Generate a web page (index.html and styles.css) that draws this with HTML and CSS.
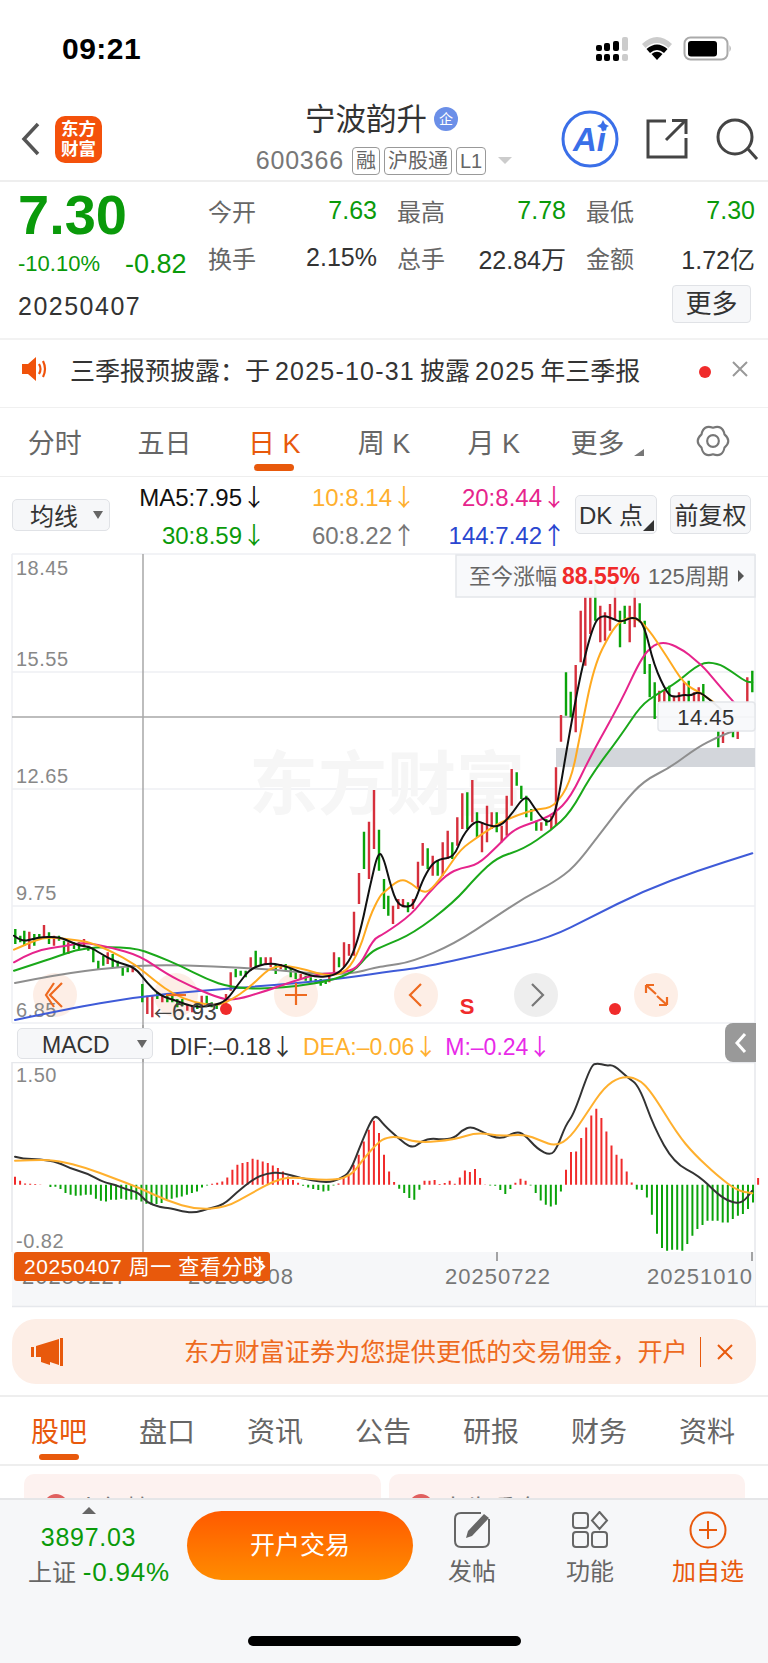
FILE: index.html
```html
<!DOCTYPE html>
<html lang="zh">
<head>
	<meta charset="utf-8">
	<title>宁波韵升</title>
	<link rel="stylesheet" href="styles.css">
</head>
<body>
<div id="page">
	<div class="status">
		<span class="time">09:21</span>
		<svg class="status-icons" width="136" height="26" viewBox="596 36 136 26">
			<g fill="#000">
				<rect x="596" y="45" width="6" height="6" rx="2"/><rect x="604" y="43" width="6" height="8" rx="2"/><rect x="613" y="41" width="6" height="10" rx="2"/>
				<rect x="596" y="54" width="6" height="7" rx="2"/><rect x="604" y="54" width="6" height="7" rx="2"/><rect x="613" y="54" width="6" height="7" rx="2"/>
			</g>
			<rect x="622" y="37" width="6" height="14" rx="2" fill="#ccc"/><rect x="622" y="54" width="6" height="7" rx="2" fill="#ccc"/>
			<path d="M642 44 Q657 30 672 44 L668.500 48 Q657 38 645.500 48Z" fill="#ccc"/>
			<path d="M646.500 49 Q657 40 667.500 49 L664 53 Q657 47 650 53Z" fill="#000"/>
			<path d="M651.500 54 Q657 49.500 662.500 54 L657 60Z" fill="#000"/>
			<rect x="684.500" y="37.500" width="43" height="22" rx="6" fill="none" stroke="#aaa" stroke-width="2"/>
			<rect x="688" y="41" width="29" height="15.500" rx="3" fill="#000"/>
			<path d="M729.500 45 Q732 48.500 729.500 52Z" fill="#aaa"/>
		</svg>
	</div>

	<div class="header">
		<div class="header-left">
			<svg width="20" height="36" viewBox="0 0 20 36"><path d="M17 3 L3 18 L17 33" fill="none" stroke="#555" stroke-width="3.500"/></svg>
			<div class="logo"><span>东方</span><span>财富</span></div>
		</div>
		<div class="title-block">
			<div class="title">宁波韵升<span class="ent">企</span></div>
			<div class="subtitle">
				<span class="code">600366</span>
				<span class="tag">融</span><span class="tag">沪股通</span><span class="tag">L1</span>
				<span class="caret"></span>
			</div>
		</div>
		<div class="header-right">
			<svg class="ai" width="58" height="58" viewBox="0 0 58 58">
				<circle cx="29" cy="29" r="27" fill="#fff" stroke="#3a6fe8" stroke-width="3"/>
				<text x="12" y="41" class="ai-text">Ai</text>
				<path d="M42 10 L44 14 L48 16 L44 18 L42 22 L40 18 L36 16 L40 14Z" fill="#3a6fe8"/>
			</svg>
			<svg width="42" height="42" viewBox="0 0 42 42" fill="none" stroke="#444" stroke-width="3">
				<path d="M20 3 H2 V39 H40 V20"/><path d="M20 22 L39 3"/><path d="M26 2.500 H40 V16"/>
			</svg>
			<svg width="44" height="44" viewBox="0 0 44 44" fill="none" stroke="#444" stroke-width="3">
				<circle cx="20" cy="20" r="17"/><path d="M33 32 L42 42"/>
			</svg>
		</div>
	</div>

	<div class="quote">
		<div class="quote-left">
			<div class="price">7.30</div>
			<div class="change"><span class="pct">-10.10%</span><span class="diff">-0.82</span></div>
			<div class="date">20250407</div>
		</div>
		<div class="quote-right">
			<div class="stats">
				<span class="k">今开</span><span class="v green">7.63</span>
				<span class="k">最高</span><span class="v green">7.78</span>
				<span class="k">最低</span><span class="v green">7.30</span>
				<span class="k">换手</span><span class="v">2.15%</span>
				<span class="k">总手</span><span class="v">22.84万</span>
				<span class="k">金额</span><span class="v">1.72亿</span>
			</div>
			<div class="more-btn">更多</div>
		</div>
	</div>

	<div class="notice">
		<svg width="28" height="28" viewBox="0 0 28 28">
			<path d="M1 9 H7 L15 2 V26 L7 19 H1Z" fill="#f0520a"/>
			<path d="M18 9 Q21 14 18 19 M22 6 Q26 14 22 22" fill="none" stroke="#f0520a" stroke-width="2.200"/>
		</svg>
		<div class="notice-text">三季报预披露：于<span class="num">2025-10-31</span>披露<span class="num">2025</span>年三季报</div>
		<span class="dot"></span>
		<svg class="notice-x" width="16" height="16" viewBox="0 0 16 16"><path d="M1 1 L15 15 M15 1 L1 15" stroke="#999" stroke-width="2"/></svg>
	</div>

	<div class="period-tabs">
		<div class="ptab">分时</div>
		<div class="ptab">五日</div>
		<div class="ptab on">日 K</div>
		<div class="ptab">周 K</div>
		<div class="ptab">月 K</div>
		<div class="ptab has-corner">更多</div>
		<div class="ptab">
			<svg width="34" height="32" viewBox="0 0 32 30" fill="none" stroke="#777" stroke-width="2">
				<path d="M16 2.500 Q25 -.6 26.800 8.750 Q34 15 26.800 21.250 Q25 30.600 16 27.500 Q7 30.600 5.200 21.250 Q-2 15 5.200 8.750 Q7 -.6 16 2.500Z"/>
				<circle cx="16" cy="15" r="5.500"/>
			</svg>
		</div>
	</div>

	<div class="ma-row">
		<div class="select ma-select">均线<span class="sel-caret"></span></div>
		<div class="ma-legend">
			<span class="black">MA5:7.95<span class="arr">↓</span></span><span class="orange">10:8.14<span class="arr">↓</span></span><span class="pink">20:8.44<span class="arr">↓</span></span>
			<span class="green">30:8.59<span class="arr">↓</span></span><span class="grey">60:8.22<span class="arr">↑</span></span><span class="blue">144:7.42<span class="arr">↑</span></span>
		</div>
		<div class="tool-btn dk">DK 点</div>
		<div class="tool-btn fq">前复权</div>
	</div>

	<svg class="chart-main" width="768" height="473" viewBox="0 553 768 473">
		<g class="grid">
			<path d="M12 555 H755 M12 673 H755 M12 790 H755 M12 907 H755 M12 1024 H755 M12 555 V1024 M755 555 V1024"/>
		</g>
		<text x="249" y="810" class="watermark">东方财富</text>
		<path d="M12 718 H755 M143 555 V1026" class="cross"/>
		<rect x="556" y="749" width="199" height="19" fill="#d3d6db"/>
		<g class="round-btn">
			<circle cx="55" cy="996" r="22"/><circle cx="176" cy="996" r="22"/><circle cx="296" cy="996" r="22"/><circle cx="416" cy="996" r="22"/>
			<circle cx="536" cy="996" r="22" class="off"/><circle cx="656" cy="996" r="22"/>
		</g>
		<g class="axis">
			<text x="16" y="576">18.45</text>
			<text x="16" y="667">15.55</text>
			<text x="16" y="784">12.65</text>
			<text x="16" y="901">9.75</text>
			<text x="16" y="1018">6.85</text>
		</g>
		<g id="candles"></g>
		<g id="ma-lines" fill="none" stroke-width="2" stroke-linejoin="round" stroke-linecap="round"></g>
		<g class="round-glyph">
			<path d="M62 984 L50 996 L62 1008 M54 984 L46 996 L54 1008"/>
			<path d="M166 996 H186"/>
			<path d="M296 984 V1006 M285 996 H307"/>
			<path d="M421 985 L410 996 L421 1007"/>
			<path d="M532 985 L543 996 L532 1007" class="off"/>
			<path d="M646 986 L656 995 M646 986 V994 M646 986 H654 M667 1006 L657 997 M667 1006 V998 M667 1006 H659"/>
		</g>
		<text x="467" y="1015" class="s-mark" text-anchor="middle">S</text>
		<circle cx="226" cy="1010" r="6" fill="#f02b2b"/>
		<circle cx="615" cy="1010" r="6" fill="#f02b2b"/>
		<text x="154" y="1021" class="low-mark"><tspan class="arr-svg">←</tspan>6.93</text>
		<rect x="456" y="556" width="299" height="42" class="box"/>
		<text x="469" y="585" class="box-k">至今涨幅</text>
		<text x="562" y="585" class="box-red">88.55%</text>
		<text x="648" y="585" class="box-k">125周期</text>
		<path d="M738 571 L744 577 L738 583Z" fill="#555"/>
		<rect x="658" y="703" width="97" height="29" rx="3" class="box"/>
		<text x="706" y="726" class="box-val" text-anchor="middle">14.45</text>
	</svg>

	<div class="macd-row">
		<div class="select macd-select">MACD<span class="sel-caret"></span></div>
		<span class="m-dif">DIF:–0.18<span class="arr">↓</span></span>
		<span class="m-dea">DEA:–0.06<span class="arr">↓</span></span>
		<span class="m-m">M:–0.24<span class="arr">↓</span></span>
		<div class="collapse">
			<svg width="14" height="22" viewBox="0 0 14 22"><path d="M11 2 L3 11 L11 20" fill="none" stroke="#fff" stroke-width="3"/></svg>
		</div>
	</div>

	<svg class="chart-macd" width="768" height="247" viewBox="0 1063 768 247">
		<path d="M12 1063.500 H755 M12 1063 V1253 M755 1063 V1307" class="grid-thin"/>
		<g class="axis">
			<text x="16" y="1083">1.50</text>
			<text x="16" y="1249">-0.82</text>
		</g>
		<rect x="12" y="1253" width="743" height="54" fill="#f6f7f9"/>
		<path d="M12 1307.500 H768" class="grid-thin"/>
		<path d="M143 1063 V1253" class="cross"/>
		<g id="macd-bars"></g>
		<g id="macd-lines" fill="none" stroke-width="2" stroke-linejoin="round" stroke-linecap="round"></g>
		<path d="M497 1253 V1262 M752 1253 V1262" stroke="#888" stroke-width="1.500"/>
		<g class="date-axis">
			<text x="22" y="1285">20250227</text>
			<text x="188" y="1285">20250508</text>
			<text x="445" y="1285">20250722</text>
			<text x="647" y="1285">20251010</text>
		</g>
		<rect x="14" y="1253" width="256" height="29" rx="3" fill="#e8590c"/>
		<text x="24" y="1275" class="date-label">20250407 周一 查看分时</text>
		<path d="M254 1258 L264 1267.500 L254 1277" fill="none" stroke="#fff" stroke-width="2.200"/>
	</svg>

	<div class="banner-wrap">
		<div class="banner">
			<svg width="32" height="28" viewBox="0 0 32 28">
				<path d="M0 9 H3 V19 H0Z M5 8 L28 1 V27 L19 24 V27 L10 24 V19 L5 19Z M29 0 H32 V28 H29Z" fill="#e8590c"/>
			</svg>
			<div class="banner-text">东方财富证券为您提供更低的交易佣金，开户</div>
			<svg class="banner-close" width="18" height="18" viewBox="0 0 18 18"><path d="M2 2 L16 16 M16 2 L2 16" stroke="#e8590c" stroke-width="2"/></svg>
		</div>
	</div>

	<div class="info-tabs">
		<div class="itab on">股吧</div>
		<div class="itab">盘口</div>
		<div class="itab">资讯</div>
		<div class="itab">公告</div>
		<div class="itab">研报</div>
		<div class="itab">财务</div>
		<div class="itab">资料</div>
	</div>

	<div class="cards">
		<div class="card"><span class="card-dot"></span>人气榜</div>
		<div class="card"><span class="card-dot"></span>大牛看盘</div>
	</div>

	<div class="bottom">
		<div class="bottom-row">
			<div class="index">
				<span class="index-up"></span>
				<div class="index-val">3897.03</div>
				<div class="index-line">上证 <span class="index-pct">-0.94%</span></div>
			</div>
			<div class="trade-btn">开户交易</div>
			<div class="actions">
				<div class="action">
					<svg width="38" height="38" viewBox="0 0 38 38" fill="none" stroke="#666" stroke-width="2">
						<path d="M28 2 H8 Q2 2 2 8 V30 Q2 36 8 36 H30 Q36 36 36 30 V8"/>
						<path d="M13 27 L15 20 L31 3 L36 7 L19 25Z" fill="#666" stroke="none"/>
					</svg>
					<span>发帖</span>
				</div>
				<div class="action">
					<svg width="38" height="38" viewBox="0 0 38 38" fill="none" stroke="#666" stroke-width="2">
						<rect x="2" y="2" width="15" height="15" rx="3"/><rect x="2" y="21" width="15" height="15" rx="3"/><rect x="21" y="21" width="15" height="15" rx="3"/>
						<path d="M28.500 1 L36 9.500 L28.500 18 L21 9.500Z"/>
					</svg>
					<span>功能</span>
				</div>
				<div class="action on">
					<svg width="38" height="38" viewBox="0 0 38 38" fill="none" stroke="#e8590c" stroke-width="2">
						<circle cx="19" cy="19" r="17.500"/><path d="M19 10 V28 M10 19 H28"/>
					</svg>
					<span>加自选</span>
				</div>
			</div>
		</div>
		<div class="home-bar"></div>
	</div>
</div>
<script src="chart.js"></script>
</body>
</html>
```
FILE: styles.css
```css
*
{
	padding: 0px;
	margin: 0px;
	box-sizing: border-box;
}
html, body
{
	background-color: white;
}
body
{
	color: #333;
	font-family: "Liberation Sans", "Noto Sans CJK SC", sans-serif;
}
#page
{
	width: 768px;
	height: 1663px;
	overflow: hidden;
	display: flex;
	flex-direction: column;
}
svg
{
	display: block;
	flex: none;
}
.green { color: #0a9a0a; }
.orange { color: #ffb02e; }
.pink { color: #e6248c; }
.black { color: #111; }
.grey { color: #777; }
.blue { color: #2a46d0; }
.arr
{
	font-family: "Noto Sans CJK SC", sans-serif;
	margin-right: -6px;
}

/* status bar */
.status
{
	height: 98px;
	flex: none;
	display: flex;
	align-items: center;
	justify-content: space-between;
	padding: 0 36px 0 62px;
}
.time
{
	font-size: 30px;
	font-weight: bold;
	color: #000;
	letter-spacing: 0.5px;
}

/* header */
.header
{
	height: 84px;
	flex: none;
	display: grid;
	grid-template-columns: 1fr auto 1fr;
	align-items: center;
	border-bottom: 2px solid #eee;
}
.header-left
{
	display: flex;
	align-items: center;
	padding-left: 21px;
	gap: 14px;
}
.logo
{
	width: 47px;
	height: 47px;
	border-radius: 10px;
	background-color: #f4510b;
	color: white;
	font-size: 17.500px;
	line-height: 20px;
	font-weight: bold;
	display: flex;
	flex-direction: column;
	align-items: center;
	justify-content: center;
}
.title-block
{
	display: flex;
	flex-direction: column;
	align-items: center;
}
.title
{
	display: flex;
	align-items: center;
	font-size: 30.500px;
	line-height: 40px;
	height: 40px;
	color: #333;
	margin: -4px 5px 0 0;
}
.ent
{
	width: 24px;
	height: 24px;
	border-radius: 50%;
	background-color: #6b8fe8;
	color: white;
	font-size: 14px;
	line-height: 24px;
	text-align: center;
	margin-left: 7px;
}
.subtitle
{
	display: flex;
	align-items: center;
	gap: 4px;
	margin-top: 7px;
}
.code
{
	font-size: 25px;
	color: #777;
	letter-spacing: 0.8px;
	margin-right: 4px;
}
.tag
{
	height: 28px;
	padding: 0 3px;
	border: 1px solid #999;
	border-radius: 4px;
	font-size: 20px;
	line-height: 26px;
	color: #666;
}
.caret
{
	width: 0;
	height: 0;
	border-left: 7px solid transparent;
	border-right: 7px solid transparent;
	border-top: 7px solid #ccc;
	margin-left: 8px;
}
.header-right
{
	display: flex;
	align-items: center;
	justify-content: flex-end;
	gap: 27px;
	padding-right: 9px;
}
.ai-text
{
	font-family: "Liberation Sans", sans-serif;
	font-size: 33px;
	font-weight: bold;
	font-style: italic;
	fill: #3a6fe8;
}

/* quote */
.quote
{
	height: 158px;
	flex: none;
	display: flex;
	border-bottom: 2px solid #f2f2f2;
}
.quote-left
{
	width: 188px;
	flex: none;
	padding: 3px 0 0 18px;
}
.price
{
	font-size: 56px;
	line-height: 60px;
	font-weight: bold;
	color: #0a9a0a;
}
.change
{
	height: 38px;
	display: flex;
	align-items: center;
	color: #0a9a0a;
	white-space: nowrap;
}
.pct
{
	font-size: 22px;
	width: 107px;
}
.diff
{
	font-size: 27px;
}
.date
{
	font-size: 25px;
	line-height: 46px;
	letter-spacing: 1.500px;
	color: #333;
}
.quote-right
{
	flex: 1;
	display: flex;
	flex-direction: column;
	padding-top: 5px;
}
.stats
{
	display: grid;
	grid-template-columns: 68px 121px 68px 121px 68px 121px;
	grid-auto-rows: 47px;
	align-items: center;
	width: 567px;
	font-size: 24px;
}
.stats .k
{
	color: #666;
	padding-left: 20px;
}
.stats .v
{
	text-align: right;
	font-size: 25px;
	white-space: nowrap;
}
.more-btn
{
	align-self: flex-end;
	width: 79px;
	height: 38px;
	margin: 4px 17px 0 0;
	background-color: #f6f7f9;
	border: 1px solid #e0e2e6;
	border-radius: 4px;
	font-size: 26px;
	line-height: 36px;
	text-align: center;
}

/* notice */
.notice
{
	height: 68px;
	flex: none;
	display: flex;
	align-items: center;
	padding: 0 20px 10px 21px;
	border-bottom: 1px solid #f0f0f0;
}
.notice-text
{
	font-size: 25px;
	margin-left: 21px;
	color: #333;
	white-space: nowrap;
}
.num
{
	letter-spacing: 1.200px;
	margin: 0 5px;
}
.dot
{
	width: 12px;
	height: 12px;
	border-radius: 50%;
	background-color: #f02b2b;
	margin-left: auto;
	position: relative;
	top: 3px;
}
.notice-x
{
	margin-left: 21px;
}

/* period tabs */
.period-tabs
{
	height: 69px;
	flex: none;
	display: grid;
	grid-template-columns: repeat(7, 1fr);
	border-bottom: 1px solid #eee;
}
.ptab
{
	display: flex;
	flex-direction: column;
	align-items: center;
	padding-top: 17px;
	font-size: 27px;
	line-height: 38px;
	height: 68px;
	color: #666;
	position: relative;
}
.ptab.on
{
	color: #e8590c;
}
.ptab.on::after
{
	content: "";
	width: 40px;
	height: 7px;
	margin-top: 1px;
	border-radius: 4px;
	background-color: #e8590c;
}
.ptab.has-corner
{
	padding-right: 12px;
}
.ptab.has-corner::after
{
	content: "";
	position: absolute;
	right: 14px;
	top: 41px;
	border-left: 10px solid transparent;
	border-bottom: 7px solid #777;
}

/* ma row */
.ma-row
{
	height: 75px;
	flex: none;
	display: flex;
	align-items: center;
	padding-left: 12px;
}
.select
{
	background-color: #f6f7f9;
	border: 1px solid #e0e2e6;
	border-radius: 5px;
	display: flex;
	align-items: center;
	position: relative;
	color: #333;
}
.ma-select
{
	width: 98px;
	height: 32px;
	font-size: 24px;
	padding-left: 17px;
}
.sel-caret
{
	position: absolute;
	right: 6px;
	top: 50%;
	margin-top: -4px;
	width: 0;
	height: 0;
	border-left: 5px solid transparent;
	border-right: 5px solid transparent;
	border-top: 8px solid #666;
}
.ma-legend
{
	width: 450px;
	display: grid;
	grid-template-columns: repeat(3, 150px);
	grid-auto-rows: 38px;
	align-items: center;
	text-align: right;
	font-size: 24px;
	flex: none;
}
.tool-btn
{
	height: 39px;
	background-color: #f6f7f9;
	border: 1px solid #e0e2e6;
	border-radius: 5px;
	font-size: 24px;
	line-height: 39px;
	text-align: center;
	position: relative;
	flex: none;
}
.dk
{
	width: 82px;
	margin-left: 15px;
	padding-right: 10px;
}
.dk::after
{
	content: "";
	position: absolute;
	right: 2px;
	bottom: 2px;
	border-left: 11px solid transparent;
	border-bottom: 11px solid #333;
}
.fq
{
	width: 81px;
	margin-left: 13px;
}

/* main chart */
.grid path
{
	stroke: #eef0f4;
	stroke-width: 1.500;
	fill: none;
}
.grid-thin
{
	stroke: #e6e8ec;
	stroke-width: 1.500;
	fill: none;
}
.cross
{
	stroke: #a8a8a8;
	stroke-width: 1.500;
	fill: none;
}
.watermark
{
	font-size: 69px;
	font-weight: bold;
	fill: #f6f6f6;
}
.axis text
{
	font-size: 20px;
	fill: #888;
	letter-spacing: 0.500px;
}
.round-btn circle
{
	fill: #fdeee6;
}
.round-btn .off
{
	fill: #eee;
}
.round-glyph path
{
	fill: none;
	stroke: #ee6a20;
	stroke-width: 2.200;
}
.round-glyph .off
{
	stroke: #777;
}
.s-mark
{
	font-size: 22px;
	font-weight: bold;
	fill: #f02b2b;
}
.low-mark
{
	font-size: 23px;
	fill: #444;
}
.arr-svg
{
	font-family: "Noto Sans CJK SC", sans-serif;
	font-size: 18px;
}
.box
{
	fill: #f8f9fb;
	fill-opacity: 0.94;
	stroke: #e4e6ea;
	stroke-width: 1.500;
}
.box-k
{
	font-size: 22px;
	fill: #666;
}
.box-red
{
	font-size: 23px;
	font-weight: bold;
	fill: #f02b2b;
}
.box-val
{
	font-size: 22px;
	fill: #333;
	letter-spacing: 0.500px;
}

/* macd */
.macd-row
{
	height: 37px;
	flex: none;
	display: flex;
	align-items: center;
	padding-left: 17px;
	font-size: 23px;
	position: relative;
}
.macd-select
{
	width: 136px;
	height: 31px;
	font-size: 23px;
	padding: 3px 0 0 24px;
}
.macd-select .sel-caret
{
	right: 5px;
}
.macd-row::before
{
	content: "";
	position: absolute;
	left: 142px;
	top: 0;
	bottom: 0;
	width: 2px;
	background-color: #a8a8a8;
}
.m-dif
{
	margin: 3px 0 0 17px;
	color: #333;
	white-space: nowrap;
}
.m-dea
{
	margin: 3px 0 0 15px;
	color: #ffb02e;
	white-space: nowrap;
}
.m-m
{
	margin: 3px 0 0 14px;
	color: #e82ae8;
	white-space: nowrap;
}
.collapse
{
	position: absolute;
	left: 725px;
	top: -2px;
	width: 31px;
	height: 39px;
	background-color: #999;
	border-radius: 8px 0 0 8px;
	display: flex;
	align-items: center;
	justify-content: center;
}
.date-axis text
{
	font-size: 22px;
	fill: #777;
	letter-spacing: 1px;
}
.date-label
{
	font-size: 21px;
	fill: white;
	letter-spacing: 0.600px;
}

/* banner */
.banner-wrap
{
	height: 88px;
	flex: none;
	padding: 10px 12px 0 12px;
	border-bottom: 2px solid #eee;
}
.banner
{
	height: 65px;
	border-radius: 24px;
	background-color: #fdeee6;
	display: flex;
	align-items: center;
	padding: 0 22px 0 19px;
}
.banner-text
{
	margin-left: 121px;
	font-size: 25.200px;
	color: #ee6a20;
	white-space: nowrap;
	padding-right: 12px;
	border-right: 1px solid #e8590c;
	line-height: 30px;
}
.banner-close
{
	margin-left: 15px;
}

/* info tabs */
.info-tabs
{
	height: 69px;
	flex: none;
	display: grid;
	grid-template-columns: repeat(7, 108px);
	padding-left: 5px;
	position: relative;
	border-bottom: 2px solid #eee;
}
.itab
{
	display: flex;
	flex-direction: column;
	align-items: center;
	padding-top: 19px;
	font-size: 28px;
	line-height: 34px;
	color: #666;
}
.itab.on
{
	color: #e8590c;
}
.itab.on::after
{
	content: "";
	width: 40px;
	height: 6px;
	margin-top: 4px;
	border-radius: 3px;
	background-color: #e8590c;
}

/* cards peeking under the bottom bar */
.cards
{
	height: 32px;
	flex: none;
	overflow: hidden;
	display: flex;
	gap: 8px;
	padding: 8px 23px 0 24px;
}
.card
{
	flex: 1;
	height: 80px;
	border-radius: 10px;
	background-color: #fdf2f0;
	padding: 20px 0 0 20px;
	display: flex;
	align-items: flex-start;
	gap: 8px;
	font-size: 25px;
	line-height: 30px;
	color: #777;
}
.card-dot
{
	width: 24px;
	height: 24px;
	border-radius: 50%;
	background-color: #e0605f;
}

/* bottom bar */
.bottom
{
	flex: 1;
	background-color: #f6f7f9;
	border-top: 2px solid #e5e6e8;
	display: flex;
	flex-direction: column;
}
.bottom-row
{
	height: 136px;
	flex: none;
	display: flex;
}
.index
{
	width: 177px;
	flex: none;
	display: flex;
	flex-direction: column;
	align-items: center;
	padding-top: 7px;
}
.index-up
{
	width: 0;
	height: 0;
	border-left: 7px solid transparent;
	border-right: 7px solid transparent;
	border-bottom: 7px solid #666;
}
.index-val
{
	font-size: 25px;
	letter-spacing: 0.700px;
	line-height: 30px;
	margin-top: 8px;
	color: #0a9a0a;
}
.index-line
{
	font-size: 24px;
	line-height: 36px;
	margin-top: 2px;
	align-self: flex-start;
	padding-left: 28px;
	color: #666;
	white-space: nowrap;
}
.index-pct
{
	color: #0a9a0a;
	font-size: 26px;
	letter-spacing: 0.800px;
}
.trade-btn
{
	width: 226px;
	height: 69px;
	margin: 11px 0 0 10px;
	border-radius: 35px;
	background: linear-gradient(#ff5a00, #ff8c00);
	color: white;
	font-size: 25px;
	line-height: 69px;
	text-align: center;
	flex: none;
}
.actions
{
	flex: 1;
	display: grid;
	grid-template-columns: repeat(3, 118px);
	padding-top: 11px;
}
.action
{
	display: flex;
	flex-direction: column;
	align-items: center;
	font-size: 24px;
	line-height: 32px;
	color: #666;
	gap: 7px;
}
.action.on
{
	color: #e8590c;
}
.home-bar
{
	width: 273px;
	height: 10px;
	border-radius: 5px;
	background-color: black;
	margin-left: 248px;
}
```
FILE: chart.js
```js
// K line and MACD are drawn from values read off the 3x traces

var NS = "http://www.w3.org/2000/svg";
var STEP = 5.055;

function trace(ox, oy, pts)
{
	var out = [];
	for (var i = 0; i < pts.length; i++)
		out.push([ox + pts[i][0] / 3, oy + pts[i][1] / 3]);
	return out;
}

function smooth(p)
{
	var d = "M" + p[0][0].toFixed(1) + " " + p[0][1].toFixed(1);
	for (var i = 1; i < p.length - 1; i++)
	{
		var mx = (p[i][0] + p[i + 1][0]) / 2;
		var my = (p[i][1] + p[i + 1][1]) / 2;
		d += "Q" + p[i][0].toFixed(1) + " " + p[i][1].toFixed(1) + " " + mx.toFixed(1) + " " + my.toFixed(1);
	}
	var last = p[p.length - 1];
	return d + "L" + last[0].toFixed(1) + " " + last[1].toFixed(1);
}

function addPath(group, d, color, width)
{
	var el = document.createElementNS(NS, "path");
	el.setAttribute("d", d);
	el.setAttribute("stroke", color);
	if (width)
		el.setAttribute("stroke-width", width);
	group.appendChild(el);
}

/* candles: x, top, bottom, colour */
var candlesL = [
	[46,1110,1155,"g"],[61,1130,1150,"g"],[73,1115,1160,"g"],[88,1118,1170,"r"],[103,1125,1160,"g"],[118,1125,1140,"g"],
	[132,1098,1135,"r"],[147,1120,1155,"g"],[162,1130,1160,"r"],[177,1130,1145,"g"],[192,1145,1185,"g"],[205,1150,1185,"r"],
	[222,1150,1170,"g"],[237,1150,1170,"g"],[252,1140,1165,"r"],[265,1160,1175,"g"],[280,1165,1210,"g"],[295,1205,1230,"g"],
	[310,1190,1220,"g"],[323,1180,1215,"r"],[338,1185,1225,"g"],[353,1205,1225,"g"],[368,1225,1250,"g"],[383,1225,1240,"g"],
	[398,1220,1240,"r"],[427,1275,1330,"g"],[442,1310,1365,"r"],[457,1310,1375,"r"],[472,1300,1320,"g"],[487,1310,1330,"r"],
	[502,1305,1330,"g"],[517,1310,1330,"g"],[532,1320,1345,"g"],[547,1320,1340,"g"],[562,1335,1355,"r"],[577,1340,1360,"r"],
	[592,1335,1350,"g"],[605,1310,1345,"r"],[620,1310,1335,"g"],[635,1330,1345,"g"],[650,1335,1350,"g"],[678,1305,1345,"r"],
	[692,1240,1295,"r"],[707,1230,1255,"g"],[722,1235,1250,"g"],[737,1235,1255,"g"],[752,1195,1235,"r"],[767,1175,1225,"g"],
	[782,1195,1220,"g"],[797,1195,1215,"r"],[812,1195,1225,"r"],[827,1215,1245,"g"],[842,1215,1230,"r"],[857,1215,1235,"g"],
	[872,1230,1255,"g"],[887,1240,1260,"g"],[902,1245,1260,"r"],[917,1250,1265,"g"],[932,1255,1270,"g"],[947,1260,1275,"g"],
	[962,1260,1280,"g"],[977,1265,1275,"g"],[988,1250,1270,"r"],[1002,1180,1240,"r"],[1017,1195,1225,"g"],[1032,1150,1225,"r"],
	[1047,1155,1190,"r"],[1062,1058,1190,"r"],[1077,942,1035,"r"],[1092,818,930,"g"],[1107,788,960,"r"],[1122,693,870,"r"],
	[1137,812,935,"g"]
];
var candlesR = [
	[0,960,1050,"g"],[13,1010,1070,"g"],[27,1040,1095,"r"],[43,1020,1050,"r"],[57,1020,1045,"r"],[72,1030,1060,"g"],[87,1020,1050,"r"],
	[102,908,990,"r"],[116,852,920,"r"],[131,868,930,"g"],[146,890,950,"r"],[161,905,950,"g"],[176,850,950,"r"],[191,815,900,"r"],
	[205,850,900,"g"],[220,775,860,"r"],[235,703,810,"r"],[250,700,810,"g"],[265,663,790,"r"],[279,760,835,"g"],[294,790,880,"r"],
	[309,740,850,"r"],[323,760,810,"r"],[338,760,820,"g"],[353,800,850,"r"],[368,710,830,"r"],[383,630,740,"r"],[398,640,680,"g"],
	[412,680,720,"g"],[427,710,775,"g"],[442,750,785,"g"],[457,785,815,"g"],[472,790,815,"r"],[487,780,800,"g"],[502,770,810,"r"],
	[516,625,800,"r"],[531,468,548,"r"],[546,340,470,"g"],[560,398,475,"g"],[575,318,520,"r"],[590,155,310,"r"],[604,115,320,"r"],
	[619,115,225,"r"],[634,75,185,"g"],[649,140,250,"r"],[663,160,245,"r"],[678,135,215,"r"],[693,85,180,"r"],[708,155,265,"g"],
	[722,140,195,"g"],[737,140,250,"r"],[752,90,205,"r"],[767,133,190,"g"],[782,185,345,"g"],[797,315,415,"g"],[812,370,480,"g"],
	[826,395,430,"r"],[841,395,430,"r"],[856,380,430,"g"],[870,410,430,"r"],[885,400,430,"r"],[900,370,430,"r"],[914,365,430,"g"],
	[930,400,430,"r"],[944,385,430,"r"],[958,375,430,"g"],[1003,515,565,"g"],[1017,515,552,"r"],[1047,515,535,"g"],[1061,515,540,"r"],
	[1090,355,430,"r"],[1105,335,400,"g"]
];

function drawCandles(list, ox)
{
	var g = document.getElementById("candles");
	var red = "", green = "";
	for (var i = 0; i < list.length; i++)
	{
		var c = list[i];
		var seg = "M" + (ox + c[0] / 3).toFixed(1) + " " + (560 + c[1] / 3).toFixed(1) + "V" + (560 + c[2] / 3).toFixed(1);
		if (c[3] == "r")
			red += seg;
		else
			green += seg;
	}
	addPath(g, red, "#d62f3c", 2.4);
	addPath(g, green, "#0aa30a", 2.4);
}
drawCandles(candlesL, 0);
drawCandles(candlesR, 384);

/* moving averages */
var maLines = [
	["#8e8e8e", [[45,1272],[170,1247],[340,1225],[480,1217],[640,1222],[800,1230],[950,1245],[1050,1245],[1130,1225],[1152,1222]],
		[[85,1208],[210,1155],[340,1070],[420,1017],[510,970],[570,925],[640,835],[720,730],[780,665],[860,625],[940,565],[1000,535],[1050,515]]],
	["#3f5bd8", [[45,1383],[200,1350],[400,1315],[600,1295],[800,1280],[1000,1262],[1152,1240]],
		[[120,1225],[340,1175],[500,1135],[620,1075],[780,995],[940,935],[1105,883]]],
	["#1aa81a", [[42,1235],[150,1200],[250,1165],[400,1165],[470,1190],[540,1220],[620,1260],[690,1285],[800,1290],[900,1280],[990,1265],[1060,1240],[1110,1180],[1152,1160]],
		[[85,1125],[210,1030],[280,950],[340,895],[420,870],[500,815],[560,760],[620,650],[710,530],[770,440],[820,405],[880,370],[950,310],[1000,312],[1040,335],[1085,368],[1105,370]]],
	["#e6248c", [[42,1210],[100,1175],[200,1160],[250,1150],[330,1165],[420,1190],[500,1245],[570,1280],[650,1315],[700,1325],[800,1295],[870,1270],[950,1245],[1040,1240],[1080,1220],[1120,1140],[1152,1125]],
		[[85,1065],[130,1005],[190,945],[230,927],[280,918],[340,862],[390,810],[450,790],[510,765],[560,715],[620,590],[710,430],[770,300],[810,255],[850,250],[900,275],[930,300],[960,325],[1010,385],[1050,430]]],
	["#ffaa20", [[42,1172],[80,1155],[130,1135],[180,1138],[230,1143],[270,1150],[330,1175],[405,1215],[470,1270],[520,1305],[580,1330],[650,1340],[690,1325],[750,1285],[810,1225],[860,1220],[920,1232],[980,1252],[1040,1240],[1080,1170],[1110,1070],[1140,1010],[1152,1000]],
		[[50,958],[85,975],[115,1000],[140,995],[190,930],[230,870],[280,835],[340,795],[400,768],[460,750],[510,745],[560,670],[590,520],[630,320],[680,220],[710,185],[750,172],[790,205],[850,295],[900,375],[950,402],[990,430]]],
	["#111111", [[42,1130],[65,1148],[100,1140],[130,1133],[180,1135],[210,1148],[240,1160],[270,1163],[300,1183],[350,1210],[405,1225],[440,1270],[480,1310],[530,1325],[580,1345],[640,1340],[680,1325],[715,1275],[750,1230],[800,1212],[850,1218],[900,1240],[950,1255],[1000,1250],[1030,1230],[1060,1185],[1085,1100],[1110,980],[1135,875],[1152,900]],
		[[20,980],[40,1035],[70,1045],[90,1035],[115,965],[140,920],[165,900],[210,895],[235,830],[275,783],[305,797],[345,805],[380,770],[425,705],[450,745],[480,785],[500,790],[520,740],[550,560],[590,340],[630,190],[655,168],[690,180],[710,190],[750,172],[780,195],[810,320],[850,405],[870,415],[900,407],[920,410],[945,397],[975,420],[1010,450]]]
];
var maGroup = document.getElementById("ma-lines");
for (var m = 0; m < maLines.length; m++)
	addPath(maGroup, smooth(trace(0, 560, maLines[m][1]).concat(trace(384, 560, maLines[m][2]))), maLines[m][0]);

/* macd histogram, height in 3x pixels */
var hist = [
	24,12,4,3,2,1,0,-7,-6,-13,-25,-30,-33,-32,-30,-30,-42,-48,-50,-45,-45,-42,-45,-44,-45,-50,-57,-60,-58,-55,-45,-42,-38,-35,-30,-25,-20,-8,-2,
	3,6,10,22,45,60,65,68,78,75,70,65,58,50,40,25,14,6,-3,-8,-13,-16,-20,-18,-2,4,20,30,60,90,130,165,192,155,
	90,40,8,-12,-25,-40,-45,-15,12,12,14,2,5,12,3,22,43,38,47,20,1,-2,-3,-16,-28,-13,6,18,12,-2,-25,-47,-60,-65,-60,-20,
	45,98,100,140,172,208,228,200,160,118,90,78,40,7,-14,-16,-38,-90,-147,-190,-198,-195,-195,-198,-178,-153,-133,-121,-108,-108,-108,-113,-113,-103,-93,-88,-73,-53,20
];
var barsRed = "", barsGreen = "";
for (var b = 0; b < hist.length; b++)
{
	var bx = (15 + STEP * b).toFixed(1);
	var seg = "M" + bx + " 1185.700V" + (1185.7 - hist[b] / 3).toFixed(1);
	if (hist[b] >= 0)
		barsRed += seg;
	else
		barsGreen += seg;
}
var barGroup = document.getElementById("macd-bars");
addPath(barGroup, barsRed, "#f02b2b", 2);
addPath(barGroup, barsGreen, "#0aa30a", 2);

var macdLines = [
	["#333333", [[45,413],[70,420],[120,420],[175,430],[210,448],[260,462],[310,490],[345,497],[380,512],[415,520],[440,550],[480,565],[510,567],[560,580],[590,580],[620,570],[670,558],[710,520],[760,480],[800,463],[845,460],[900,477],[980,492],[1020,480],[1050,460],[1085,370],[1115,300],[1130,290],[1152,318]],
		[[40,355],[85,390],[115,365],[145,358],[170,362],[210,358],[235,333],[262,322],[300,342],[350,362],[395,338],[420,345],[460,390],[500,410],[520,385],[545,318],[570,285],[620,140],[640,132],[665,140],[690,138],[730,175],[765,200],[810,325],[870,432],[945,470],[1000,525],[1040,550],[1075,553],[1105,515]]],
	["#ffb02e", [[45,425],[120,422],[175,425],[260,447],[340,477],[415,505],[500,545],[590,572],[680,565],[750,525],[820,487],[870,473],[980,485],[1050,475],[1090,420],[1130,375],[1152,358]],
		[[40,352],[105,372],[210,362],[280,340],[350,352],[420,345],[470,365],[515,382],[560,355],[610,280],[660,205],[710,172],[760,178],[800,215],[880,345],[930,405],[1000,470],[1060,515],[1105,523]]]
];
var macdGroup = document.getElementById("macd-lines");
for (var l = 0; l < macdLines.length; l++)
	addPath(macdGroup, smooth(trace(0, 1020, macdLines[l][1]).concat(trace(384, 1020, macdLines[l][2]))), macdLines[l][0]);
```
